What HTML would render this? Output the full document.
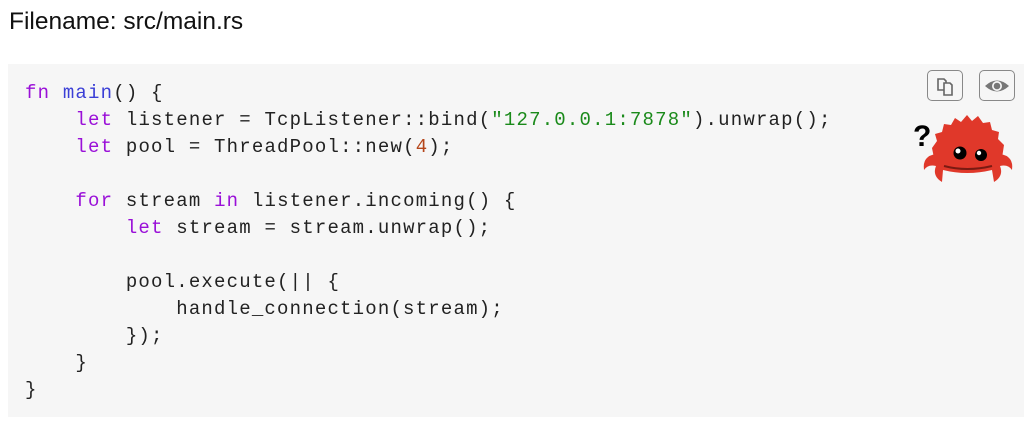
<!DOCTYPE html>
<html><head><style>
body{margin:0;width:1034px;height:437px;background:#fff;overflow:hidden;font-family:"Liberation Sans",sans-serif;}
.fn{position:absolute;left:9px;top:8px;font-size:24.5px;color:#111;}
.code{position:absolute;left:8px;top:64px;width:1016px;height:353px;background:#f6f6f6;}
pre{margin:0;position:absolute;left:25px;top:80px;font-family:"Liberation Mono",monospace;font-size:19px;letter-spacing:1.2px;line-height:27px;color:#222;}
.k{color:#9a10d8}.f{color:#3b3fd6}.s{color:#1a8a1a}.n{color:#b5461a}
.btn{position:absolute;top:70px;width:36px;height:31px;border:1px solid #888;border-radius:5px;box-sizing:border-box;background:#f6f6f6;}
</style></head><body>
<div class="fn">Filename: src/main.rs</div>
<div class="code"></div>
<pre><span class="k">fn</span> <span class="f">main</span>() {
    <span class="k">let</span> listener = TcpListener::bind(<span class="s">"127.0.0.1:7878"</span>).unwrap();
    <span class="k">let</span> pool = ThreadPool::new(<span class="n">4</span>);

    <span class="k">for</span> stream <span class="k">in</span> listener.incoming() {
        <span class="k">let</span> stream = stream.unwrap();

        pool.execute(|| {
            handle_connection(stream);
        });
    }
}</pre>
<div class="btn" style="left:927px"><svg width="34" height="29" viewBox="0 0 34 29"><g fill="#f6f6f6" stroke="#666" stroke-width="1.6"><path d="M10 8 h6 l2 2 v9 h-8z"/><path d="M16 12 h6 l2 2 v10 h-8z"/></g></svg></div>
<div class="btn" style="left:979px"><svg width="34" height="29" viewBox="0 0 34 29"><path d="M5 15 Q17 4 29 15 Q17 26 5 15Z" fill="#777"/><circle cx="17" cy="15" r="5" fill="#f6f6f6"/><circle cx="17" cy="15" r="3.3" fill="#777"/></svg></div>
<svg style="position:absolute;left:910px;top:108px" width="120" height="80" viewBox="0 0 120 80">
<text x="3" y="38" font-family="Liberation Sans" font-weight="bold" font-size="30" fill="#000">?</text>
<path d="M22 40 L27 33 L25 26 L32 24 L34 16 L41 17 L45 10 L51 14 L57 7 L62 13 L68 8 L73 15 L80 14 L82 22 L89 24 L88 31 L94 37 L92 50 Q57 66 24 50Z" fill="#e0382a"/>
<path d="M26 46 Q12 48 14 62 Q18 56 26 58 Q22 68 32 74 L33 62 Q57 68 82 62 L84 74 Q94 68 90 58 Q98 56 102 62 Q104 48 90 46Z" fill="#e0382a"/>
<path d="M34 58 Q57 64 82 58" stroke="#7a1a12" stroke-width="2" fill="none"/>
<circle cx="50" cy="45" r="6.5" fill="#000"/><circle cx="48" cy="43" r="2.5" fill="#fff"/>
<circle cx="71" cy="47" r="6" fill="#000"/><circle cx="69" cy="45" r="2.2" fill="#fff"/>
</svg>
</body></html>
